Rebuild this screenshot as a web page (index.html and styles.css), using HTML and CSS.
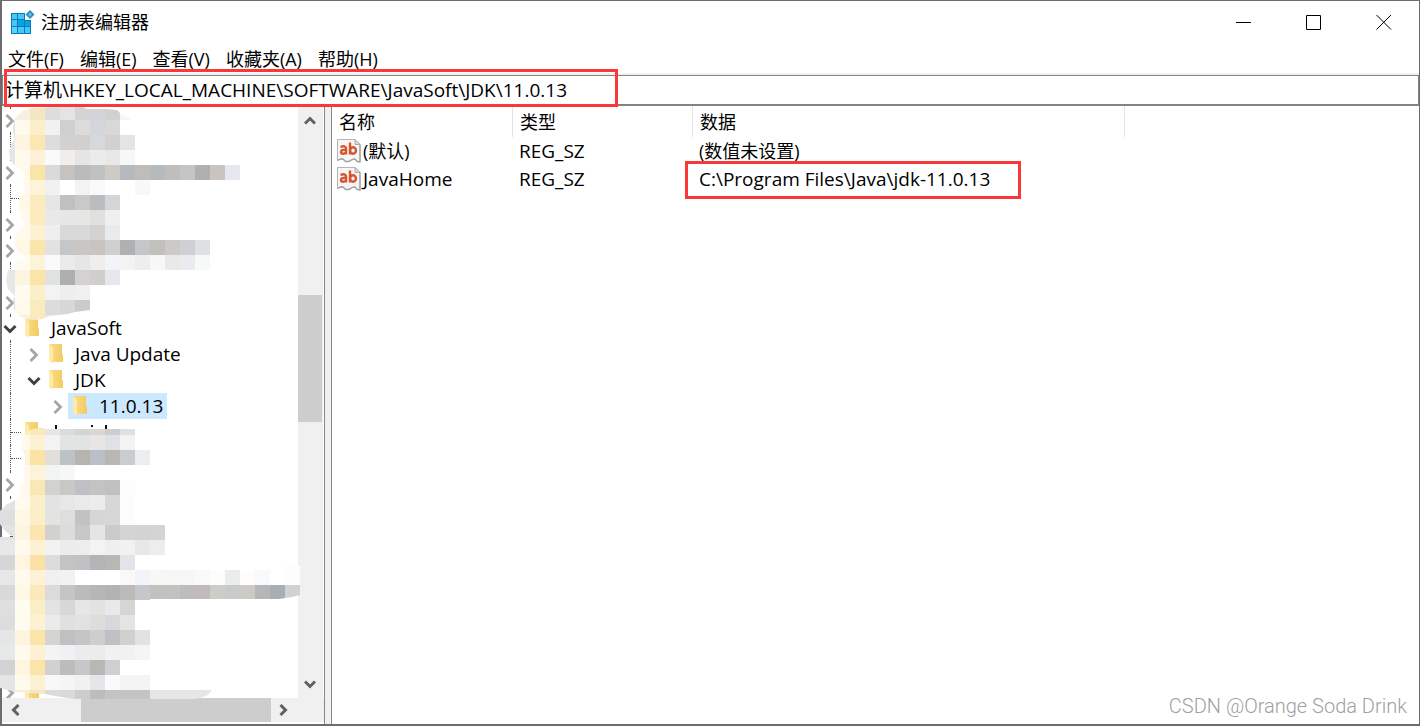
FILE: index.html
```html
<!DOCTYPE html>
<html lang="zh-CN">
<head>
<meta charset="utf-8">
<title>注册表编辑器</title>
<link rel="stylesheet" href="styles.css">
</head>
<body>
<svg class="defs" aria-hidden="true">
  <defs>
    <linearGradient id="gold" x1="0" x2="1"><stop offset="0" stop-color="#fbdf8c"/><stop offset="1" stop-color="#f2cb62"/></linearGradient>
    <symbol id="folder" viewBox="0 0 16 20"><path d="M1 0h13v10l1 1v7H4z" fill="url(#gold)"/><path d="M1 0l4 4v16l-4-3z" fill="#ffeaa9"/></symbol>
    <symbol id="closed" viewBox="0 0 10 14"><path d="M1.500 1L7.500 7l-6 6" fill="none" stroke="#a6a6a6" stroke-width="2.800"/></symbol>
    <symbol id="open" viewBox="0 0 14 10"><path d="M1.500 2L7 7.500 12.500 2" fill="none" stroke="#404040" stroke-width="3"/></symbol>
    <symbol id="arrow" viewBox="0 0 12 10"><path d="M1 7.500L6 2.500l5 5" fill="none" stroke="#606060" stroke-width="3"/></symbol>
    <symbol id="string" viewBox="0 0 24 24">
      <path d="M.5.5H18l5 5V23l-3-.5-2-2.500-3 .5-3 2H8.500L6 20H3.500L.5 21.500z" fill="#f6f6f6" stroke="#b5b5b5"/>
      <path d="M18 .5V5.500h5z" fill="#ddd" stroke="#aaa"/><path d="M23 6v17l-3-.5-2-2.500-3 .5-3 2H8.500L6 20H3.500L.5 21.500" fill="none" stroke="#a0a0a0" stroke-width="1.300"/>
      <g fill="none" stroke="#d9532f" stroke-width="2.400"><path d="M3.500 8q5-2 5.500 1.500v6M9 11c-3-.3-5 .2-5 2 0 2.300 4 2.300 5 0M13 3.500V15.500"/><ellipse cx="16" cy="11.500" rx="3" ry="3.200"/></g>
    </symbol>
  </defs>
</svg>
<div class="window">
  <header class="titlebar">
    <svg class="app-icon" viewBox="0 0 24 24" aria-hidden="true">
      <path d="M0 3h14v7h6v14H0z" fill="#0a7ab8"/>
      <path d="M1 4h5v5H1zM7 4h6v5H7zM1 10h5v6H1zM7 17h6v6H7zM14 17h5v6h-5z" fill="#44c8f5"/>
      <path d="M7 10h6v6H7zM14 11h5v5h-5z" fill="#08a4df"/><path d="M1 17h5v6H1z" fill="#5ad2fa"/>
      <path d="M19 0l4.500 4.500L19 9l-4.500-4.500z" fill="#2c91bd"/><path d="M19 2.500l2 2-2 2-2-2z" fill="#63c3e5"/>
    </svg>
    <h1 class="title">注册表编辑器</h1>
    <div class="controls">
      <button aria-label="最小化"><svg viewBox="0 0 16 16"><path d="M0 8.500h15"/></svg></button>
      <button aria-label="最大化"><svg viewBox="0 0 16 16"><path d="M.5 1.500h14v14H.5z"/></svg></button>
      <button aria-label="关闭"><svg viewBox="0 0 16 16"><path d="M.5 1l14.500 14.500M15 1L.5 15.500"/></svg></button>
    </div>
  </header>
  <nav class="menubar">
    <button>文件(F)</button><button>编辑(E)</button><button>查看(V)</button><button>收藏夹(A)</button><button>帮助(H)</button>
  </nav>
  <div class="address">
    <input aria-label="地址" value="计算机\HKEY_LOCAL_MACHINE\SOFTWARE\JavaSoft\JDK\11.0.13">
    <span class="mark mark-address"></span>
  </div>
  <main class="panes">
    <section class="tree-pane">
      <div class="tree-top">
        <ul class="tree" id="tree"></ul>
        <div class="vscroll">
          <svg class="arrow"><use href="#arrow"/></svg>
          <div class="vtrack"><div class="vthumb"></div></div>
          <svg class="arrow down"><use href="#arrow"/></svg>
        </div>
      </div>
      <div class="hscroll">
        <svg class="arrow left"><use href="#arrow"/></svg>
        <div class="htrack"><div class="hthumb"></div></div>
        <svg class="arrow right"><use href="#arrow"/></svg>
      </div>
      <svg class="mosaic" id="mosaic" viewBox="0 105 300 595" aria-hidden="true">
        <clipPath id="blob">
          <path d="M15 118L22 111 30 108 60 107 83 107 87 109 105 109 117 110 121 114 130 119 130 120H140V165H300V270H120V285H90V310L75 312 68 314 50 316 42 319 35 320 25 319 18 315 14 309 13 299 15 296 8 289 6 280 8 269 15 262 27 258 19 253 15 245 15 236 19 229 26 226 21 217 19 208 20 198 25 192 23 182 26 173 15 166 10 160 9 151 12 143 14 140 13 128z"/>
          <path d="M30 430L38 428H45V429H170V566H300V595L292 597 279 599H150V690H212L208 695 200 698 195 699H75L55 696 45 694 15 692 0 688V537H14L5 531 0 524V511L6 505 15 500 19 497 20 486 26 480 23 470 26 457 22 450 21 443 24 435z"/>
        </clipPath>
        <g id="cells" clip-path="url(#blob)" shape-rendering="crispEdges"></g>
        <path d="M55 425h2v4h-2zM91 425h2v2h-2zM105 425h2v4h-2z" fill="#111"/>
      </svg>
    </section>
    <div class="splitter"></div>
    <section class="list-pane">
      <table class="values">
        <thead><tr><th class="c-name">名称</th><th class="c-type">类型</th><th class="c-data">数据</th></tr></thead>
        <tbody>
          <tr><td class="name"><span class="entry"><svg><use href="#string"/></svg>(默认)</span></td><td class="latin">REG_SZ</td><td>(数值未设置)</td></tr>
          <tr><td class="name latin"><span class="entry"><svg><use href="#string"/></svg>JavaHome</span></td><td class="latin">REG_SZ</td><td class="latin marked">C:\Program Files\Java\jdk-11.0.13<span class="mark mark-data"></span></td></tr>
        </tbody>
      </table>
      <p class="watermark">CSDN @Orange Soda Drink</p>
    </section>
  </main>
</div>
<script src="tree.js"></script>
</body>
</html>
```
FILE: styles.css
```css
* { box-sizing: border-box; }
body { margin: 0; font: 18px/26px "Open Sans", "Noto Sans CJK SC", sans-serif; color: #000; background: #fff; overflow: hidden; }
button, input { font: inherit; color: inherit; border: 0; padding: 0; background: none; }
.defs { position: absolute; width: 0; height: 0; }
.window { display: flex; flex-direction: column; height: 100vh; border: solid #6d6d70; border-width: 1px 1px 2px 2px; }

.titlebar { display: flex; align-items: center; height: 44px; padding: 0 0 2px 9px; }
.app-icon { width: 24px; height: 24px; margin-right: 6px; }
.title { flex: 1; margin: 0; font-size: 18px; font-weight: 400; }
.controls { display: flex; align-self: stretch; }
.controls button { width: 70px; display: grid; place-items: center; }
.controls svg { width: 16px; height: 16px; fill: none; stroke: #000; }

.menubar { display: flex; gap: 16px; height: 28px; padding-left: 6px; }
.menubar button { white-space: nowrap; }

.address { position: relative; display: flex; height: 33px; border-top: 2px solid #f0f0f0; }
.address input { flex: 1; padding-left: 2px; border: 1px solid #828287; border-bottom: 2px solid #828287; outline: 0; min-width: 0; font-size: 19px; }
.mark { position: absolute; z-index: 3; border: 3px solid #fb3838; pointer-events: none; }
.mark-address { left: 2px; top: -6px; width: 614px; height: 38px; }
.mark-data { left: -8px; top: -4px; width: 336px; height: 38px; }

.panes { flex: 1; display: flex; min-height: 0; }
.tree-pane { position: relative; flex: 0 0 322px; display: flex; flex-direction: column; padding-bottom: 2px; }
.tree-top { flex: 1; display: flex; min-height: 0; }
.tree { flex: 1; margin: 0; padding: 1px 0 0; list-style: none; overflow: hidden; font-size: 19px; }
.row { position: relative; display: flex; align-items: center; height: 26px; }
.row::before { content: ""; position: absolute; left: 8px; top: 0; bottom: 0; border-left: 1px dotted #555; }
.row.leaf::after { content: ""; position: absolute; left: 9px; top: 13px; width: 10px; border-top: 1px dotted #555; }
.level-1 { padding-left: 24px; }
.level-2 { padding-left: 48px; }
.toggle { position: relative; flex: 0 0 18px; height: 22px; display: grid; place-items: center start; padding: 2px 0 0 3px; background: #fff; }
.leaf .toggle { visibility: hidden; }
.toggle svg { width: 10px; height: 14px; }
.toggle .open { width: 14px; height: 10px; margin-left: -2px; }
.label { display: flex; align-items: center; gap: 11px; height: 26px; padding: 0 4px; white-space: pre; }
.label svg { width: 16px; height: 20px; }
.selected .label { background: #cce8ff; }

.vscroll { width: 25px; display: flex; flex-direction: column; padding: 10px 0 9px; background: #f0f0f0; margin-right: 1px; }
.vscroll .arrow { margin-left: 6px; }
.arrow { width: 12px; height: 10px; }
.down { transform: rotate(180deg); }
.left { transform: rotate(-90deg); }
.right { transform: rotate(90deg); }
.vtrack { flex: 1; padding: 169px 1px 0 0; }
.vthumb { height: 127px; background: #cdcdcd; }
.hscroll { display: flex; align-items: center; height: 24px; padding: 0 35px 0 8px; background: #f0f0f0; }
.htrack { flex: 1; height: 100%; padding: 0 6px 0 59px; }
.hthumb { height: 100%; background: #cdcdcd; }
.mosaic { position: absolute; left: -2px; top: -1px; width: 300px; height: 595px; z-index: 1; }
.splitter { flex: 0 0 8px; border: solid #828790; border-width: 0 1px; background: #f0f0f0; }

.list-pane { position: relative; flex: 1; min-width: 0; }
.values { width: 793px; table-layout: fixed; border-collapse: separate; border-spacing: 0; }
.values th { height: 31px; padding: 0 7px; font-weight: 400; text-align: left; border-right: 1px solid #e5e5e5; }
.c-name { width: 181px; }
.c-type { width: 180px; }
.values td { height: 28px; padding: 0 6px; white-space: nowrap; }
.values td.name { padding-left: 5px; }
.entry { display: flex; align-items: center; gap: 2px; }
.entry svg { width: 24px; height: 24px; }
.latin { font-size: 19px; }
.marked { position: relative; }
.watermark { position: absolute; right: 12px; bottom: 5px; margin: 0; color: #a0a0a0; font: 300 20px/26px Roboto, sans-serif; }
```
FILE: tree.js
```js
// c: collapsed, o: expanded, l: leaf
const rows = [
  ["c", 0], ["l", 0], ["c", 0], ["l", 0], ["c", 0], ["c", 0], ["l", 0], ["c", 0],
  ["o", 0, "JavaSoft"], ["c", 1, "Java Update"], ["o", 1, "JDK"], ["c", 2, "11.0.13", true],
  ["l", 0], ["l", 0], ["c", 0], ["c", 0], ["l", 0], ["c", 0], ["c", 0], ["c", 0], ["c", 0], ["c", 0], ["c", 0]
];
document.getElementById("tree").innerHTML = rows.map(([kind, level, name = "", selected]) => {
  const open = kind === "o";
  return `<li class="row level-${level}${kind === "l" ? " leaf" : ""}${selected ? " selected" : ""}">
    <button class="toggle" aria-label="${open ? "折叠" : "展开"}"><svg class="${open ? "open" : ""}"><use href="#${open ? "open" : "closed"}"/></svg></button>
    <span class="label"><svg><use href="#folder"/></svg>${name}</span></li>`;
}).join("");

// Each line: top of the band, then one colour per 15px cell ("-" leaves it clear)
const bands = `
105 - f6f0e2 f5e6c3 dddddd e4e4e4 d2d4d8 d2d4d8 cfd0d0 f4f7f7
120 e0e2e2 fffaec faeecb f1f1f1 d0cfd0 dddbd9 d3d5db d8d8d8
135 e6e8e8 fdf5e2 fde7b0 dddddd d2d1d0 d1d0cf d5d9dd d2d1d0 e1e5e8
150 e4e7e7 fffaec fdf2d8 fafafa f0eeec e5e5e5 ebebeb e8e8e8 f5f7f9
165 - fffaec fbe4a8 dadada c7c2c0 b9bbbd bfc1c0 cfcac5 b5bac1 bfbcba b5babd c0bdbb c4c6c5 b0b0b0 cac4c0 e5e8ee
180 - fffaec fdf3d9 f1f1f1 feffff f3f3f4 fafafa - - f7f9f8
195 - fff8e5 fdebbf e6e6e6 c0c0c0 cbc9c7 babcbe d4d5d7
210 - fffaec fdebbf ebe9e7 e6e6e6 e7e6e4 e0e0de eeeff1
225 - fffaec fdf1d3 efefef d8d8d8 d9d9d9 d4d2d0 e8eaeb
240 - fff8e5 fbe5ab e3e2e0 c4c6c8 c9c6c4 c8c4c2 d0d0d0 afb0b2 c4c6c8 c1c0bb cbcac8 cfd0d5 dfe0e2
255 - fffbef fdf3d9 fafafa ebebeb e6e6e6 f0eeec f2f4f8 f3f3f3 eeeeee f7f7f7 ebe9e7 e9ebee f7f9f9
270 e7e7e7 fdf5e0 fbe4a8 e0e1e1 acafae d3d1d1 d0cecb e5e7ec
285 e7e7e7 fffbef fbefc9 f3f3f3 eeeeee f0f0f0
300 dfdfdf fffaec faebbf dcdcda d7d7d7 c9cbcd
315 - fbf3d9 f8ebc4 e8e8e8
420 - fcefc9 fbe9b8 e7e6e4 dadbdc d3d4d6 dad7d3 cccdd0 dfe0e1
435 - fffaec fdf1d3 f5f3f1 e2e4e4 e1e4e3 e7e6e4 dfe1e4 f3f3f3
450 - fdf5e0 fbe3a4 e1dedb bcc2c6 b9b3af bbbfc7 bab6b3 cacdd0 ecedee
465 - fffaec fdf3d9 f2f4f3 f5f8f7
480 - fffaec fae7b6 d2d2d0 c9c8c5 bfc0c5 c3c3c4 c1c1c3 fdfdfe
495 e2e4e3 fffbef fceec9 e3e3e3 e7e7e7 e9ebea ececec d7d7d7 fbfdfd
510 dcdfde fff8e5 fceec9 e5e3e2 dededd c2c2c5 d6d6d7 d7d7d7 fbfdfd
525 e2e3e3 fbf5e2 fde6ae d2d1d0 dbdcdc c8c8c9 e6e5e3 c9cccb d4d4d5 d3d3d1 d4d4d4
540 e8e8e8 fffaec fcf1d2 f4f2f1 ebedec ebeeed f3f3f1 eef0ef f1f1f1 e8e8e8 ebeeed
555 d6d6d6 fff5e0 fbe2a4 dadddb c5c3c1 c0c1c4 b5b3b4 b9b7b5 e1e5e9 - - - - - - - - - - fdfdfd
570 e5e8e7 fffaec fdf1d8 f0f0f0 f2f2f2 ffffff ffffff ffffff faf9f7 f2f4f7 f7f7f5 f6f6f6 f6f6f6 f9f9f9 fffdfa eaecee fffdfa f7f9fc ffffff fdfdfd
585 d9d9d9 fff8e5 fce9bb dddbd9 c5c5c6 b9bbbe b8b6b4 b4b3b1 bcbab8 c4c8cc c1c1c1 c3c2be babcc0 c0bbb9 cccdc8 c9cbcb cccac5 b5b7b6 a9aeb2 d2d2d2
600 dfdfdf fffbef fbeec4 e3e3e3 d7d7d7 e4e7e6 e1e2e2 e9e9e9 d5d5d5
615 dddddd fffbef fcf1d2 edebe9 dfe1e1 e2e2e2 dfddda d6d8db e4e4e4
630 e6e6e6 fdf5e0 fbe4a8 d4d4d2 c0c0c0 c7c5c3 cdced0 bfc0c3 d0d0cd e1e3e2
645 e5e9e7 fffaec fcf1d2 f6f4f2 eff1f4 ececec ececec f1f1f1 f1f1f1 f4f6f6
660 d3d3d3 fff5e0 fbe4a8 d2d1cf bcbcbc c6c7c9 b8b7b4 cfcfd1
675 e5e5e5 fffaec fdf1d3 f8f8f8 f5f5f3 f1f1f1 e4e6e9 fafafa f4f4f4 f4f4f4
690 e0e0e0 f4f0df f0e8cb dddbd9 d9d9d9 cecdcb bbbebd c3c4c6 c3c4c6 c3c4c6 e6e6e6 e6e6e6 e6e6e6 e6e6e6 e6e6e6`;
document.getElementById("cells").innerHTML = bands.trim().split("\n").map(line => {
  const [y, ...cells] = line.split(" ");
  return cells.map((c, i) => c === "-" ? "" : `<rect x="${i * 15}" y="${y}" width="15" height="15" fill="#${c}"/>`).join("");
}).join("");
```
